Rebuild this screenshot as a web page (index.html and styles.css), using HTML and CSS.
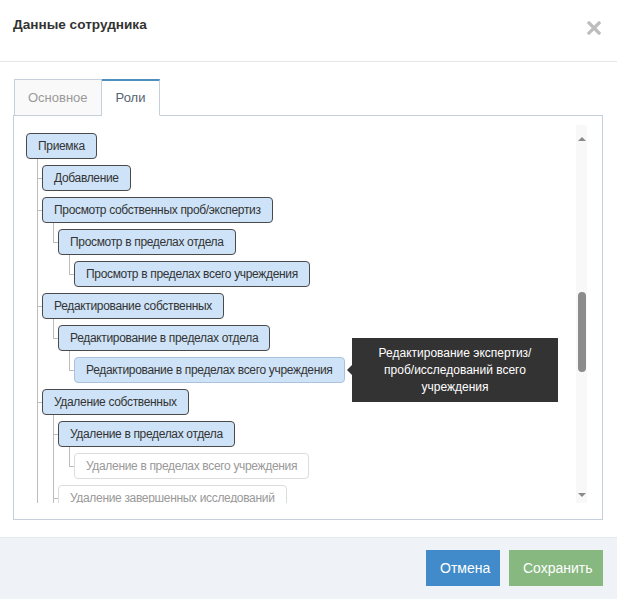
FILE: index.html
```html
<!DOCTYPE html>
<html lang="ru">
<head>
<meta charset="utf-8">
<title>Данные сотрудника</title>
<link rel="stylesheet" href="styles.css">
</head>
<body>
<div class="modal">
  <div class="modal-header">
    <h4 class="modal-title">Данные сотрудника</h4>
    <button class="close" aria-label="Закрыть">
      <svg width="14" height="14" viewBox="0 0 14 14"><path d="M2 2 L12 12 M12 2 L2 12" stroke="#bdbdbd" stroke-width="3.2" stroke-linecap="square"/></svg>
    </button>
  </div>
  <div class="modal-body">
    <ul class="tabs">
      <li class="tab">Основное</li>
      <li class="tab active">Роли</li>
    </ul>
    <div class="panel">
      <div class="tree-wrap">
        <ul class="tree">
          <li><span class="node">Приемка</span>
            <ul>
              <li><span class="node">Добавление</span></li>
              <li><span class="node">Просмотр собственных проб/экспертиз</span>
                <ul>
                  <li><span class="node">Просмотр в пределах отдела</span>
                    <ul>
                      <li><span class="node">Просмотр в пределах всего учреждения</span></li>
                    </ul>
                  </li>
                </ul>
              </li>
              <li><span class="node">Редактирование собственных</span>
                <ul>
                  <li><span class="node">Редактирование в пределах отдела</span>
                    <ul>
                      <li><span class="node hover">Редактирование в пределах всего учреждения</span></li>
                    </ul>
                  </li>
                </ul>
              </li>
              <li class="cont"><span class="node">Удаление собственных</span>
                <ul>
                  <li><span class="node">Удаление в пределах отдела</span>
                    <ul>
                      <li><span class="node off">Удаление в пределах всего учреждения</span></li>
                    </ul>
                  </li>
                  <li class="cont"><span class="node off">Удаление завершенных исследований</span></li>
                </ul>
              </li>
            </ul>
          </li>
        </ul>
      </div>
      <div class="scrollbar">
        <span class="arrow up"></span>
        <div class="track"><div class="thumb"></div></div>
        <span class="arrow down"></span>
      </div>
      <div class="tooltip">Редактирование экспертиз/ проб/исследований всего учреждения</div>
    </div>
  </div>
  <div class="modal-footer">
    <button class="btn btn-primary">Отмена</button>
    <button class="btn btn-success">Сохранить</button>
  </div>
</div>
</body>
</html>
```
FILE: styles.css
```css
* { box-sizing: border-box; }
html, body { margin: 0; padding: 0; background: #fff; }
body {
  font-family: "Liberation Sans", Arial, sans-serif;
  color: #393939;
  width: 617px;
  height: 599px;
  overflow: hidden;
}
.modal { display: flex; flex-direction: column; height: 599px; }
.modal-header {
  height: 62px;
  border-bottom: 1px solid #e5e5e5;
  display: flex;
  justify-content: space-between;
  align-items: flex-start;
  padding: 16px 16px 0 13px;
}
.modal-title {
  margin: 0;
  font-size: 13.6px;
  font-weight: bold;
  line-height: 18px;
  color: #333;
}
.close {
  background: none;
  border: 0;
  padding: 0;
  margin-top: 5px;
  width: 14px;
  height: 14px;
  display: block;
}
.close svg { display: block; }

.modal-body { padding: 17px 14px 17px 13px; flex: 1; }
.tabs {
  list-style: none;
  margin: 0;
  padding: 0 0 0 1px;
  display: flex;
  height: 37px;
  position: relative;
  z-index: 1;
}
.tab {
  height: 37px;
  padding: 0 13px;
  line-height: 36px;
  font-size: 13px;
  color: #999;
  background: #f9f9f9;
  border: 1px solid #c5d0dc;
}
.tab.active {
  color: #576373;
  background: #fff;
  border-top: 2px solid #4c8fbd;
  border-left: 0;
  border-bottom-color: #fff;
  line-height: 34px;
  padding: 0 14px;
}
.panel {
  position: relative;
  margin-top: -1px;
  border: 1px solid #c5d0dc;
  height: 405px;
  display: flex;
  padding: 9px 15px 16px 1px;
}
.tree-wrap { flex: 1; height: 378px; overflow: hidden; padding: 8px 0 0 11px; }
.tree, .tree ul { list-style: none; margin: 0; padding: 0; }
.tree ul { margin-left: 11px; padding-left: 5px; }
.tree li { position: relative; }
.tree ul li { padding-top: 6px; }
.tree ul li::before {
  content: "";
  position: absolute;
  left: -5px;
  top: 0;
  bottom: 0;
  border-left: 1px solid #bcbcbc;
}
.tree ul li:last-child::before { bottom: auto; height: 19px; }
.tree ul li.cont:last-child::before { bottom: 0; height: auto; }
.tree ul li::after {
  content: "";
  position: absolute;
  left: -5px;
  top: 19px;
  width: 5px;
  border-top: 1px solid #bcbcbc;
}
.node {
  display: inline-block;
  height: 26px;
  line-height: 24px;
  padding: 0 11px;
  font-size: 12px;
  letter-spacing: -0.33px;
  color: #333;
  background: #cfe3f8;
  border: 1px solid #4a4a4a;
  border-radius: 4px;
  white-space: nowrap;
}
.node.hover { border-color: #a9c3dc; }
.node.off { background: #fff; border-color: #dcdcdc; color: #999; }

.scrollbar {
  width: 11px;
  display: flex;
  flex-direction: column;
  align-items: center;
  background: #f8f8f8;
  padding: 12px 0 6px;
}
.arrow { width: 0; height: 0; border-left: 4px solid transparent; border-right: 4px solid transparent; }
.arrow.up { border-bottom: 4px solid #8a8a8a; }
.arrow.down { border-top: 4px solid #8a8a8a; }
.track { flex: 1; width: 8px; position: relative; }
.thumb {
  position: absolute;
  top: 151px;
  left: 0;
  width: 8px;
  height: 80px;
  border-radius: 4px;
  background: #8c8c8c;
}
.tooltip {
  position: absolute;
  left: 338px;
  top: 222px;
  width: 206px;
  height: 64px;
  padding: 7px 14px 0;
  background: #333;
  color: #fff;
  font-size: 12px;
  line-height: 17px;
  text-align: center;
}
.tooltip::before {
  content: "";
  position: absolute;
  left: -5px;
  top: 27px;
  border-top: 5px solid transparent;
  border-bottom: 5px solid transparent;
  border-right: 5px solid #333;
}

.modal-footer {
  height: 63px;
  background: #eff3f8;
  border-top: 1px solid #e4e9ee;
  display: flex;
  justify-content: flex-end;
  align-items: flex-start;
  gap: 9px;
  padding: 12px 14px 0 0;
}
.btn {
  height: 36px;
  border: 0;
  color: #fff;
  font-family: "Liberation Sans", Arial, sans-serif;
  font-size: 14px;
  padding: 0 14px;
}
.btn-primary { background: #428bca; width: 74px; }
.btn-success { background: #87b87f; width: 94px; }
```
